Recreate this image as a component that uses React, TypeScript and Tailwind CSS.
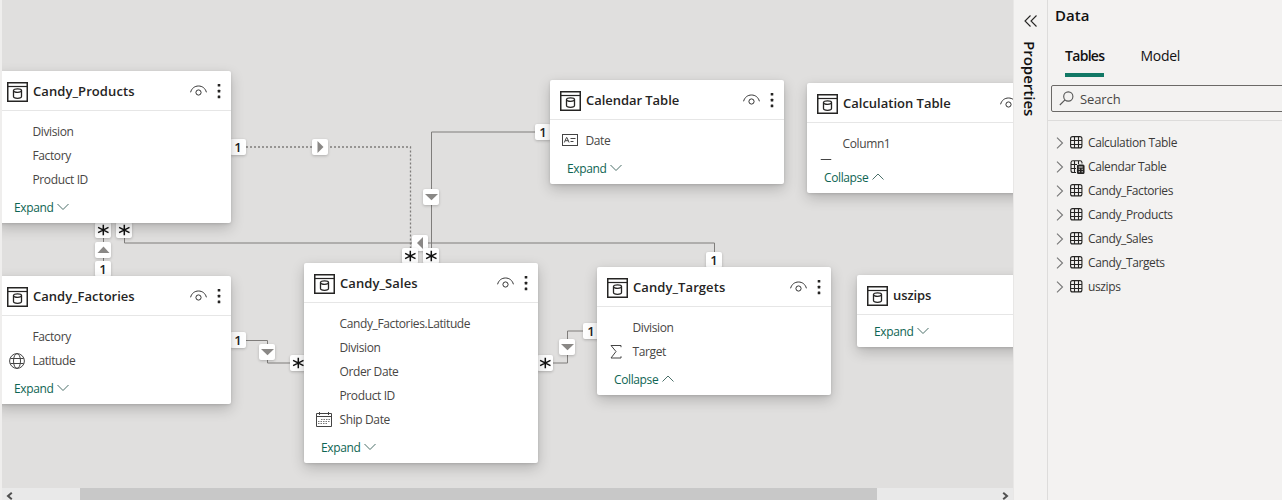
import React from "react";

type FieldIcon = "globe" | "calendar" | "card" | "sigma";
type Field = { name: string; icon?: FieldIcon };
type TableCard = {
  title: string;
  titleTrack: string;
  place: string;
  fields: Field[];
  clipped?: boolean;
  open?: boolean;
};

const cards: TableCard[] = [
  {
    title: "Candy_Products",
    titleTrack: "tracking-[0.08px]",
    place: "left-[-5px] top-[71px] h-[152px]",
    fields: [{ name: "Division" }, { name: "Factory" }, { name: "Product ID" }],
  },
  {
    title: "Candy_Factories",
    titleTrack: "tracking-[0px]",
    place: "left-[-5px] top-[276px] h-[128px]",
    fields: [{ name: "Factory" }, { name: "Latitude", icon: "globe" }],
  },
  {
    title: "Candy_Sales",
    titleTrack: "tracking-[0.08px]",
    place: "left-[302px] top-[263px] h-[200px]",
    fields: [
      { name: "Candy_Factories.Latitude" },
      { name: "Division" },
      { name: "Order Date" },
      { name: "Product ID" },
      { name: "Ship Date", icon: "calendar" },
    ],
  },
  {
    title: "Candy_Targets",
    titleTrack: "tracking-[0.08px]",
    place: "left-[595px] top-[267px] h-[128px]",
    fields: [{ name: "Division" }, { name: "Target", icon: "sigma" }],
    open: true,
  },
  {
    title: "Calendar Table",
    titleTrack: "tracking-[-0.05px]",
    place: "left-[548px] top-[80px] h-[104px]",
    fields: [{ name: "Date", icon: "card" }],
  },
  {
    title: "Calculation Table",
    titleTrack: "tracking-[0px]",
    place: "left-[805px] top-[83px] h-[110px]",
    fields: [{ name: "Column1" }],
    clipped: true,
    open: true,
  },
  {
    title: "uszips",
    titleTrack: "tracking-[-0.1px]",
    place: "left-[855px] top-[275px] h-[72px]",
    fields: [],
  },
];

type BadgeKind = "one" | "many" | "up" | "down" | "left" | "right";
const badges: { kind: BadgeKind; place: string }[] = [
  { kind: "left", place: "left-[410px] top-[235px]" },
  { kind: "one", place: "left-[228px] top-[139px]" },
  { kind: "right", place: "left-[310px] top-[139px]" },
  { kind: "down", place: "left-[421px] top-[189px]" },
  { kind: "many", place: "left-[93px] top-[222px]" },
  { kind: "many", place: "left-[114px] top-[222px]" },
  { kind: "up", place: "left-[93px] top-[242px]" },
  { kind: "one", place: "left-[93px] top-[261px]" },
  { kind: "one", place: "left-[228px] top-[332px]" },
  { kind: "down", place: "left-[257px] top-[344px]" },
  { kind: "many", place: "left-[288px] top-[355px]" },
  { kind: "many", place: "left-[400px] top-[248px]" },
  { kind: "many", place: "left-[421px] top-[248px]" },
  { kind: "one", place: "left-[533px] top-[124px]" },
  { kind: "one", place: "left-[704px] top-[252px]" },
  { kind: "one", place: "left-[581px] top-[323px]" },
  { kind: "down", place: "left-[557px] top-[339px]" },
  { kind: "many", place: "left-[535px] top-[355px]" },
];

const shapes: Record<Exclude<BadgeKind, "one">, React.ReactNode> = {
  many: <path d="M8.300 2.800v10.400M3.100 5.400l10.400 5.200M13.500 5.400L3.100 10.600" stroke="#111" strokeWidth="1.500" fill="none" />,
  up: <path d="M8.500 4.500L14.500 11h-12z" fill="#8a8886" />,
  down: <path d="M2 5h13L8.500 11.300z" fill="#8a8886" />,
  left: <path d="M11 2v12L5 8z" fill="#8a8886" />,
  right: <path d="M5.500 2v12L11.500 8z" fill="#8a8886" />,
};

function Badge({ kind, place }: { kind: BadgeKind; place: string }) {
  return (
    <div
      className={`absolute flex size-4 items-center justify-center rounded-[2px] bg-white text-[13px] leading-4 font-semibold text-[#222] shadow-[0_1px_3px_rgba(0,0,0,0.22)] ${place}`}
    >
      {kind === "one" ? (
        <span>1</span>
      ) : (
        <svg className="size-4" viewBox="0 0 16 16">
          {shapes[kind]}
        </svg>
      )}
    </div>
  );
}

function TableIcon() {
  return (
    <svg className="-ml-[0.5px] h-[20px] w-[21px] shrink-0" viewBox="0 0 21 20" fill="none" stroke="#252423">
      <rect x="0.75" y="0.75" width="19.5" height="18.5" strokeWidth="1.5" />
      <path d="M1 4.500h19" strokeWidth="1.200" />
      <ellipse cx="10.500" cy="8.600" rx="4" ry="1.700" strokeWidth="1.300" />
      <path d="M6.500 8.600v6c0 1 1.800 1.700 4 1.700s4-.7 4-1.700v-6" strokeWidth="1.300" />
    </svg>
  );
}

function Eye() {
  return (
    <svg className="h-[12px] w-[17px]" viewBox="0 0 17 12" fill="none" stroke="#333" strokeWidth="1">
      <path d="M0.600 7.300C1.600 3.300 4.700 1 8.500 1s6.900 2.300 7.900 6.300" />
      <circle cx="8.500" cy="7.500" r="2.600" />
    </svg>
  );
}

function Dots() {
  return (
    <svg className="h-[16px] w-[4px]" viewBox="0 0 4 16" fill="#252423">
      <rect x="0.700" y="1" width="2.600" height="2.600" rx=".5" />
      <rect x="0.700" y="6.800" width="2.600" height="2.600" rx=".5" />
      <rect x="0.700" y="12.600" width="2.600" height="2.600" rx=".5" />
    </svg>
  );
}

function FieldGlyph({ icon }: { icon: FieldIcon }) {
  return (
    <svg className="size-4" viewBox="0 0 16 16" fill="none" stroke="#444" strokeWidth="1">
      {icon === "globe" && (
        <>
          <circle cx="8" cy="8" r="7.400" />
          <ellipse cx="8" cy="8" rx="3.500" ry="7.400" />
          <path d="M1.300 5.500h13.400M1.300 10.500h13.400" />
        </>
      )}
      {icon === "calendar" && (
        <>
          <path d="M.5 1.500h15v13H.5zM.5 4.500h15M3.500 0v3M12.500 0v3" />
          <path d="M5 7.500h9M2 9.500h12M2 11.500h9" stroke="#777" strokeDasharray="1.500 1" />
        </>
      )}
      {icon === "card" && (
        <>
          <rect x=".5" y="1.500" width="15" height="11" />
          <path d="M2.300 9.500l2.200-5h.4l2.200 5M3.200 7.700h3M8.500 5.500h5M8.500 8.500h3" />
        </>
      )}
      {icon === "sigma" && <path d="M12 3.200V1.500H2l5 6-5 6.500h10v-1.700" />}
    </svg>
  );
}

function Card({ card }: { card: TableCard }) {
  return (
    <div
      className={`absolute flex w-[234px] flex-col rounded-[2px] bg-white shadow-[0_5px_14px_rgba(0,0,0,0.2),0_1px_3px_rgba(0,0,0,0.12)] ${card.place}`}
    >
      <div className="flex h-[40px] shrink-0 items-center border-b border-[#e6e6e6] pt-[3px] pr-[10px] pl-[10px]">
        <TableIcon />
        <span
          className={`-mt-[3px] ml-[5.5px] grow text-[13px] leading-5 font-semibold whitespace-nowrap text-[#252423] ${card.titleTrack}`}
        >
          {card.title}
        </span>
        <div className="-mt-[2px] flex items-center gap-[10px]">
          <Eye />
          <Dots />
        </div>
      </div>
      {card.fields.length > 0 && (
        <div className={`overflow-hidden pt-[9px] ${card.clipped ? "mb-px h-[37px] shrink-0" : ""}`}>
          {card.fields.map((f) => (
            <div key={f.name} className="flex h-6 items-center pl-3">
              <div className="flex w-6 shrink-0">{f.icon && <FieldGlyph icon={f.icon} />}</div>
              <span className="-ml-[0.5px] text-[12px] tracking-[-0.38px] whitespace-nowrap text-[#484644]">{f.name}</span>
            </div>
          ))}
          {card.clipped && (
            <div className="flex h-6 items-start pt-[2px] pl-[12px]">
              <FieldGlyph icon="sigma" />
            </div>
          )}
        </div>
      )}
      <div className="flex h-8 shrink-0 items-center gap-[4px] pt-[2px] pl-[17px] text-[12px] tracking-[-0.38px] text-[#0e6553]">
        <span>{card.open ? "Collapse" : "Expand"}</span>
        <svg className="-mt-[2px] h-[8px] w-[12px]" viewBox="0 0 12 8" fill="none" stroke="#4b6f69" strokeWidth="1">
          <path d={card.open ? "M.5 6.500L6 1l5.500 5.500" : "M.5 1L6 6.500 11.500 1"} />
        </svg>
      </div>
    </div>
  );
}

function Relations() {
  return (
    <svg className="absolute top-0 left-0 h-[488px] w-[1011px]" viewBox="2 0 1011 488" fill="none" stroke="#7f7d7b">
      <path d="M246 147H410.500V250" strokeWidth="1.300" strokeDasharray="2 2" />
      <path d="M536 132H431.500V250M124.500 236V243H714.500V254M103.500 236V264M246 340.500H267.500V363H292M552 363H567.500V331H584" />
    </svg>
  );
}

function GridIcon({ calc }: { calc?: boolean }) {
  return (
    <svg className="h-[14px] w-[15px] shrink-0" viewBox="0 0 15 14" fill="none" stroke="#252423" strokeWidth="1.100">
      {calc ? (
        <>
          <path d="M6 12.500H3A2 2 0 0 1 1 10.500v-8A2 2 0 0 1 3 .8h7a2 2 0 0 1 2 1.700v1M4.500 1v11M8.500 1v3M1 4.500h6M1 8.500h5" />
          <rect x="7.500" y="5" width="6.500" height="8.500" rx="1" fill="#252423" />
          <path d="M8.700 7h4M8.700 9.300h1.200M11.600 9.300h1.200M8.700 11.700h1.200M11.600 11.700h1.200" stroke="#f3f2f1" />
        </>
      ) : (
        <>
          <rect x=".6" y=".6" width="11.300" height="11.300" rx="2" />
          <path d="M4.500.5V12M8.500.5V12M.5 4.500H12M.5 8.500H12" />
        </>
      )}
    </svg>
  );
}

const tables = [
  "Calculation Table",
  "Calendar Table",
  "Candy_Factories",
  "Candy_Products",
  "Candy_Sales",
  "Candy_Targets",
  "uszips",
];

export default function App() {
  return (
    <div className="flex h-[500px] w-[1282px] overflow-hidden bg-[#f3f2f1] font-['Open_Sans','Noto_Sans',sans-serif]">
      <main className="flex w-[1014px] shrink-0 flex-col border-r border-l-2 border-r-[#e8e7e6] border-l-[#efeeed]">
        <div className="relative h-[488px] overflow-hidden bg-[#e0dfde]">
          <Relations />
          {badges.map((b) => (
            <Badge key={b.place} kind={b.kind} place={b.place} />
          ))}
          {cards.map((c) => (
            <Card key={c.title} card={c} />
          ))}
        </div>
        <div className="flex h-3 items-center justify-between bg-[#e9e9e9]">
          <div className="flex w-[78px] pl-[4px]">
            <svg className="mt-[3px] h-[8px] w-[7px]" viewBox="0 0 7 8" fill="none" stroke="#505050" strokeWidth="2">
              <path d="M5.800.8L2 4l3.800 3.200" />
            </svg>
          </div>
          <div className="h-3 w-[797px] bg-[#c8c8c8]" />
          <div className="flex grow justify-end pr-[4px]">
            <svg className="mt-[3px] h-[8px] w-[7px]" viewBox="0 0 7 8" fill="none" stroke="#505050" strokeWidth="2">
              <path d="M1.200.8L5 4 1.200 7.200" />
            </svg>
          </div>
        </div>
      </main>

      <aside className="flex w-[34px] shrink-0 flex-col items-center border-r border-[#dddcdb] pt-[15px]">
        <svg className="h-[12px] w-[13px]" viewBox="0 0 13 12" fill="none" stroke="#252423" strokeWidth="1.100">
          <path d="M6.500.5L1 6l5.500 5.500M12.500.5L7 6l5.500 5.500" />
        </svg>
        <h2 className="mt-[14px] mr-[2px] text-[15px] leading-5 font-semibold text-[#111] [writing-mode:vertical-rl]">
          Properties
        </h2>
      </aside>

      <aside className="flex grow flex-col overflow-hidden">
        <h2 className="mt-[4px] pl-[7px] text-[15px] leading-[22px] font-semibold text-[#111]">Data</h2>
        <div className="mt-[19px] flex h-[32px] pl-[17px] text-[14px] leading-[22px] text-[#111]">
          <div className="h-[32px] w-[39px] border-b-4 border-[#117865] font-semibold tracking-[-0.7px] whitespace-nowrap">
            Tables
          </div>
          <div className="ml-[36.5px] tracking-[-0.3px]">Model</div>
        </div>
        <div className="mt-[8px] ml-[3px] flex h-[27px] w-[240px] items-center rounded-[2px] border border-[#6b6967] pl-[7px]">
          <svg className="size-[15px]" viewBox="0 0 15 15" fill="none" stroke="#555" strokeWidth="1.100">
            <circle cx="9.300" cy="5.500" r="4.600" />
            <path d="M6 8.900L.8 14" />
          </svg>
          <span className="mt-[2px] ml-[6px] text-[13px] tracking-[-0.1px] text-[#484644]">Search</span>
        </div>
        <div className="mt-[8px] border-t border-[#dddcdb] pt-[10px]">
          {tables.map((t) => (
            <div key={t} className="flex h-6 items-center pl-[8px]">
              <svg className="h-[12px] w-[8px]" viewBox="0 0 8 12" fill="none" stroke="#777" strokeWidth="1.100">
                <path d="M1 .7L6.500 6 1 11.300" />
              </svg>
              <div className="ml-[6px] flex w-[18px]">
                <GridIcon calc={t === "Calendar Table"} />
              </div>
              <span className="text-[12px] tracking-[-0.38px] text-[#3b3a39]">{t}</span>
            </div>
          ))}
        </div>
      </aside>
    </div>
  );
}
